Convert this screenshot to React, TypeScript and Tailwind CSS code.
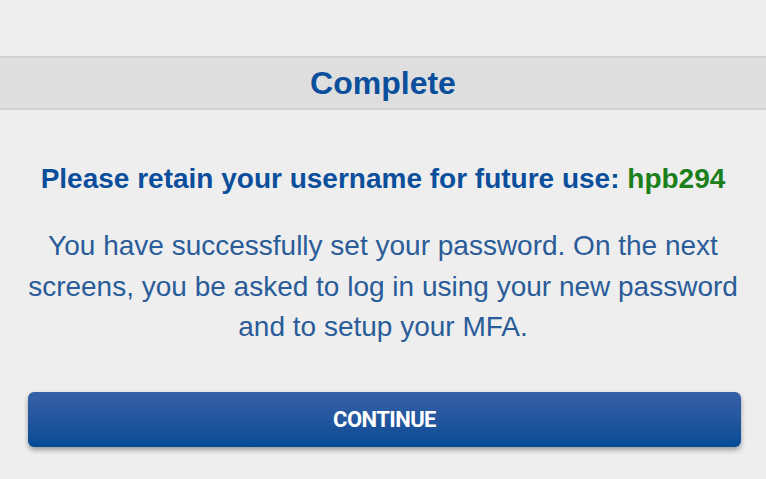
import React from 'react';

const App: React.FC = () => {
  return (
    <div className="min-h-screen w-full bg-[#eeeeee] font-['Liberation_Sans',Arial,sans-serif] pt-[56px]">
      <div className="h-[54px] flex items-center justify-center bg-[#dedede] border-y-2 border-[#d2d2d2]">
        <h1 className="text-[32px] font-bold text-[#0b4f9c] leading-none">Complete</h1>
      </div>

      <div className="px-[20px] flex flex-col items-center">
        <p className="mt-[54px] text-[28px] font-bold text-[#0b4f9c] leading-[30px] text-center whitespace-nowrap">
          Please retain your username for future use: <span className="text-[#1b7f1b]">hpb294</span>
        </p>

        <p className="mt-[32px] text-[28px] text-[#2a5c99] leading-[40.5px] text-center">
          You have successfully set your password. On the next screens, you be asked to log in using your new password and to setup your MFA.
        </p>

        <div className="w-full pl-[8px] pr-[5px]">
          <button className="mt-[44px] w-full h-[55px] rounded-[6px] bg-gradient-to-b from-[#3761a7] to-[#024b95] shadow-[0_3px_5px_rgba(0,0,0,0.35)] flex items-center justify-center">
            <span className="text-white font-bold text-[22px] font-['Roboto',sans-serif] tracking-tight">CONTINUE</span>
          </button>
        </div>
      </div>
    </div>
  );
};

export default App;
